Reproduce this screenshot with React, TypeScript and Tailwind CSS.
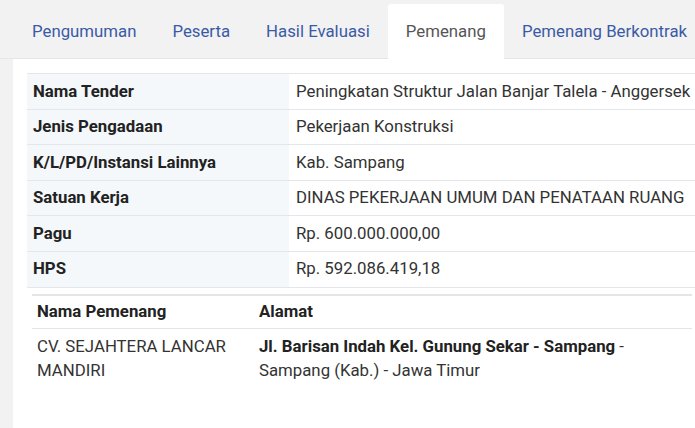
import React from "react";

const rows: [string, string][] = [
  ["Nama Tender", "Peningkatan Struktur Jalan Banjar Talela - Anggersek"],
  ["Jenis Pengadaan", "Pekerjaan Konstruksi"],
  ["K/L/PD/Instansi Lainnya", "Kab. Sampang"],
  ["Satuan Kerja", "DINAS PEKERJAAN UMUM DAN PENATAAN RUANG"],
  ["Pagu", "Rp. 600.000.000,00"],
  ["HPS", "Rp. 592.086.419,18"],
];

const tabs = ["Pengumuman", "Peserta", "Hasil Evaluasi", "Pemenang", "Pemenang Berkontrak"];

export default function App() {
  return (
    <div className="w-[695px] h-[428px] overflow-hidden bg-[#f2f2f2] font-['Roboto',sans-serif] text-[16.8px]">
      <div className="flex pl-[14px] pt-[4px] border-b border-[#e6e6e6] h-[59px] whitespace-nowrap">
        {tabs.map((t) =>
          t === "Pemenang" ? (
            <div key={t} className="px-[18px] bg-white text-[#555] flex items-center h-[55px] rounded-t-[3px]">
              {t}
            </div>
          ) : (
            <div key={t} className="px-[18px] text-[#3a5aa6] flex items-center h-[55px]">
              {t}
            </div>
          )
        )}
      </div>
      <div className="ml-[13px] bg-white w-[720px] h-[400px] pt-[14px] pl-[14px]">
        <table className="w-[720px] border-collapse border-t border-[#e3e7eb] whitespace-nowrap">
          <tbody>
            {rows.map(([k, v]) => (
              <tr key={k} className="border-b border-[#e3e7eb]">
                <td className="w-[262px] bg-[#f4f8fb] px-[6px] py-[4.5px] leading-[25.6px] font-bold text-[#222]">{k}</td>
                <td className="px-[7px] py-[4.5px] leading-[25.6px] text-[#333]">{v}</td>
              </tr>
            ))}
          </tbody>
        </table>
        <table className="ml-[5px] mt-[6px] w-[660px] border-collapse border-t-2 border-[#e3e5e8] text-left">
          <thead>
            <tr className="border-b border-[#e3e5e8]">
              <th className="w-[222px] px-[5px] py-[3.5px] leading-[25px] font-bold text-[#222]">Nama Pemenang</th>
              <th className="px-[5px] py-[3.5px] leading-[25px] font-bold text-[#222]">Alamat</th>
            </tr>
          </thead>
          <tbody>
            <tr>
              <td className="align-top px-[5px] py-[5px] leading-[24.5px] text-[#333]">CV. SEJAHTERA LANCAR MANDIRI</td>
              <td className="align-top px-[5px] py-[5px] leading-[24.5px] text-[#333]">
                <span className="font-bold text-[#222]">Jl. Barisan Indah Kel. Gunung Sekar - Sampang</span> - Sampang (Kab.) - Jawa Timur
              </td>
            </tr>
          </tbody>
        </table>
      </div>
    </div>
  );
}
